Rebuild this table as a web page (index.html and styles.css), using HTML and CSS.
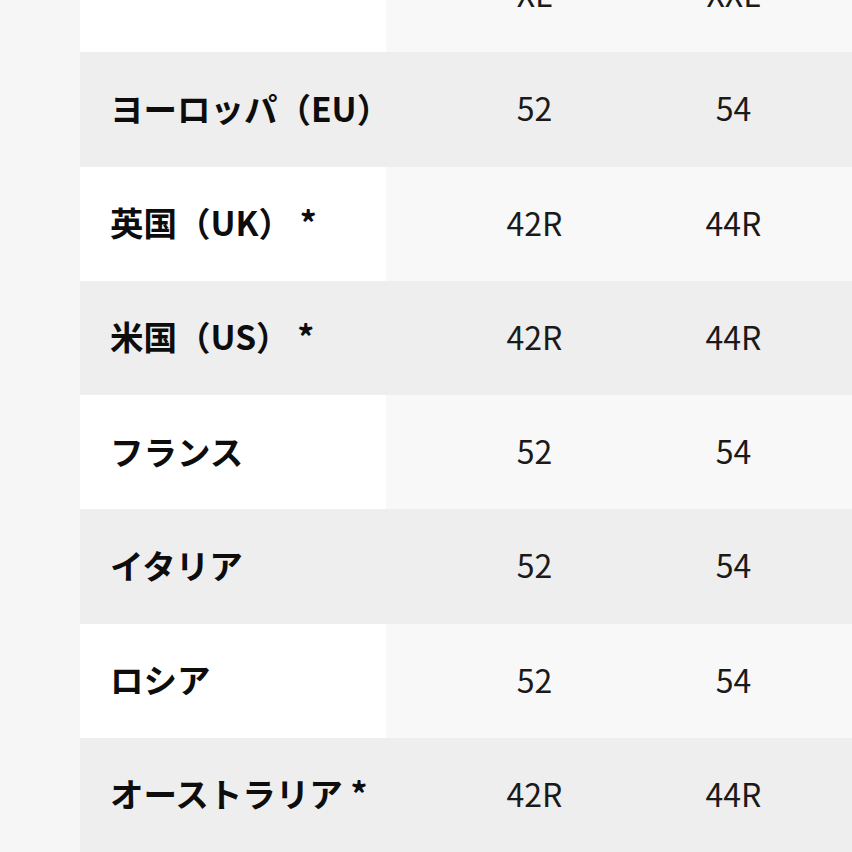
FILE: index.html
```html
<!DOCTYPE html>
<html lang="ja">
<head>
<meta charset="utf-8">
<link rel="stylesheet" href="styles.css">
</head>
<body>
<div class="page">
  <div class="table">
    <div class="row">
      <div class="label"></div>
      <div class="vals"><span>XL</span><span>XXL</span></div>
    </div>
    <div class="row alt">
      <div class="label">ヨーロッパ（EU）</div>
      <div class="vals"><span>52</span><span>54</span></div>
    </div>
    <div class="row">
      <div class="label">英国（UK） *</div>
      <div class="vals"><span>42R</span><span>44R</span></div>
    </div>
    <div class="row alt">
      <div class="label">米国（US） *</div>
      <div class="vals"><span>42R</span><span>44R</span></div>
    </div>
    <div class="row">
      <div class="label">フランス</div>
      <div class="vals"><span>52</span><span>54</span></div>
    </div>
    <div class="row alt">
      <div class="label">イタリア</div>
      <div class="vals"><span>52</span><span>54</span></div>
    </div>
    <div class="row">
      <div class="label">ロシア</div>
      <div class="vals"><span>52</span><span>54</span></div>
    </div>
    <div class="row alt">
      <div class="label">オーストラリア *</div>
      <div class="vals"><span>42R</span><span>44R</span></div>
    </div>
  </div>
</div>
</body>
</html>
```
FILE: styles.css
```css
html, body {
  margin: 0;
  padding: 0;
  background: #f6f6f6;
  overflow: hidden;
}
.page {
  display: flex;
  width: 852px;
  height: 852px;
  overflow: hidden;
  background: #f6f6f6;
  font-family: "Noto Sans CJK JP", "Noto Sans", sans-serif;
  color: #111;
}
.table {
  flex: 1;
  margin-left: 80px;
  margin-top: -62px;
}
.row {
  display: grid;
  grid-template-columns: 306px 1fr;
  height: 114.28px;
}
.label,
.vals {
  box-sizing: border-box;
  padding-bottom: 4px;
}
.label {
  background: #ffffff;
  display: flex;
  align-items: center;
  padding-left: 30px;
  font-size: 33.5px;
  font-weight: 700;
  white-space: pre;
  color: #0d0d0d;
}
.vals {
  background: #f8f8f8;
  display: grid;
  grid-template-columns: 199px 199px;
  padding-left: 49px;
  align-items: center;
  justify-items: center;
  font-size: 32px;
  font-weight: 400;
  color: #1a1a1a;
}
.row.alt .label,
.row.alt .vals {
  background: #eeeeee;
}
```
